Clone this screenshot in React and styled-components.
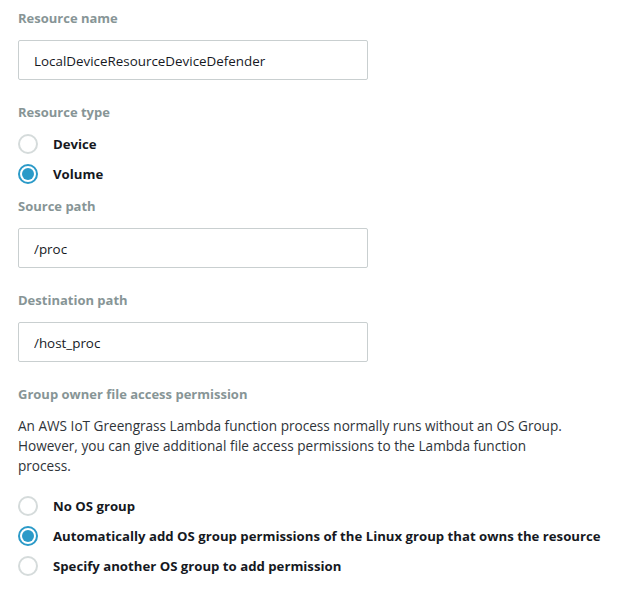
import React from "react";
import styled, { createGlobalStyle } from "styled-components";

const GlobalStyle = createGlobalStyle`
  body {
    margin: 0;
    background: #ffffff;
    font-family: "Open Sans", "Noto Sans", sans-serif;
  }
`;

const Page = styled.div`
  padding: 8px 18px 0;
  width: 600px;
`;

const Field = styled.div`
  display: flex;
  flex-direction: column;
  margin-bottom: ${p => p.gap || 22}px;
`;

const Label = styled.div`
  font-size: 13px;
  font-weight: 700;
  color: #879596;
  line-height: 20px;
  margin-bottom: ${p => p.space || 12}px;
`;

const Input = styled.input`
  box-sizing: border-box;
  width: 350px;
  height: 40px;
  border: 1px solid #c9cfd0;
  border-radius: 2px;
  padding: 1px 15px 0;
  font-family: inherit;
  font-size: 13.4px;
  color: #16191f;
  background: #fff;
  outline: none;
`;

const Description = styled.p`
  margin: 0 0 20px;
  font-size: 13.6px;
  line-height: 20px;
  color: #2f3439;
  width: 552px;
`;

const RadioList = styled.div`
  display: flex;
  flex-direction: column;
  gap: 10px;
`;

const RadioRow = styled.label`
  display: flex;
  align-items: center;
  gap: 15px;
  height: 20px;
  font-size: 13.2px;
  font-weight: 700;
  color: #16191f;
`;

const RadioDot = styled.span`
  box-sizing: border-box;
  width: 20px;
  height: 20px;
  border-radius: 50%;
  border: 2px solid ${p => (p.checked ? "#2b9ac8" : "#d5dbdb")};
  background: #fff;
  display: flex;
  align-items: center;
  justify-content: center;
  flex: none;
  &::after {
    content: "";
    width: 12px;
    height: 12px;
    border-radius: 50%;
    background: ${p => (p.checked ? "#2b9ac8" : "transparent")};
  }
`;

const Radio = ({ checked, children }) => (
  <RadioRow>
    <RadioDot checked={checked} />
    {children}
  </RadioRow>
);

export default function App() {
  return (
    <Page>
      <GlobalStyle />
      <Field>
        <Label>Resource name</Label>
        <Input readOnly value="LocalDeviceResourceDeviceDefender" />
      </Field>
      <Field gap={12}>
        <Label space={12}>Resource type</Label>
        <RadioList>
          <Radio>Device</Radio>
          <Radio checked>Volume</Radio>
        </RadioList>
      </Field>
      <Field>
        <Label>Source path</Label>
        <Input readOnly value="/proc" />
      </Field>
      <Field>
        <Label>Destination path</Label>
        <Input readOnly value="/host_proc" />
      </Field>
      <Field>
        <Label>Group owner file access permission</Label>
        <Description>
          An AWS IoT Greengrass Lambda function process normally runs without an OS Group.
          However, you can give additional file access permissions to the Lambda function
          process.
        </Description>
        <RadioList>
          <Radio>No OS group</Radio>
          <Radio checked>Automatically add OS group permissions of the Linux group that owns the resource</Radio>
          <Radio>Specify another OS group to add permission</Radio>
        </RadioList>
      </Field>
    </Page>
  );
}
